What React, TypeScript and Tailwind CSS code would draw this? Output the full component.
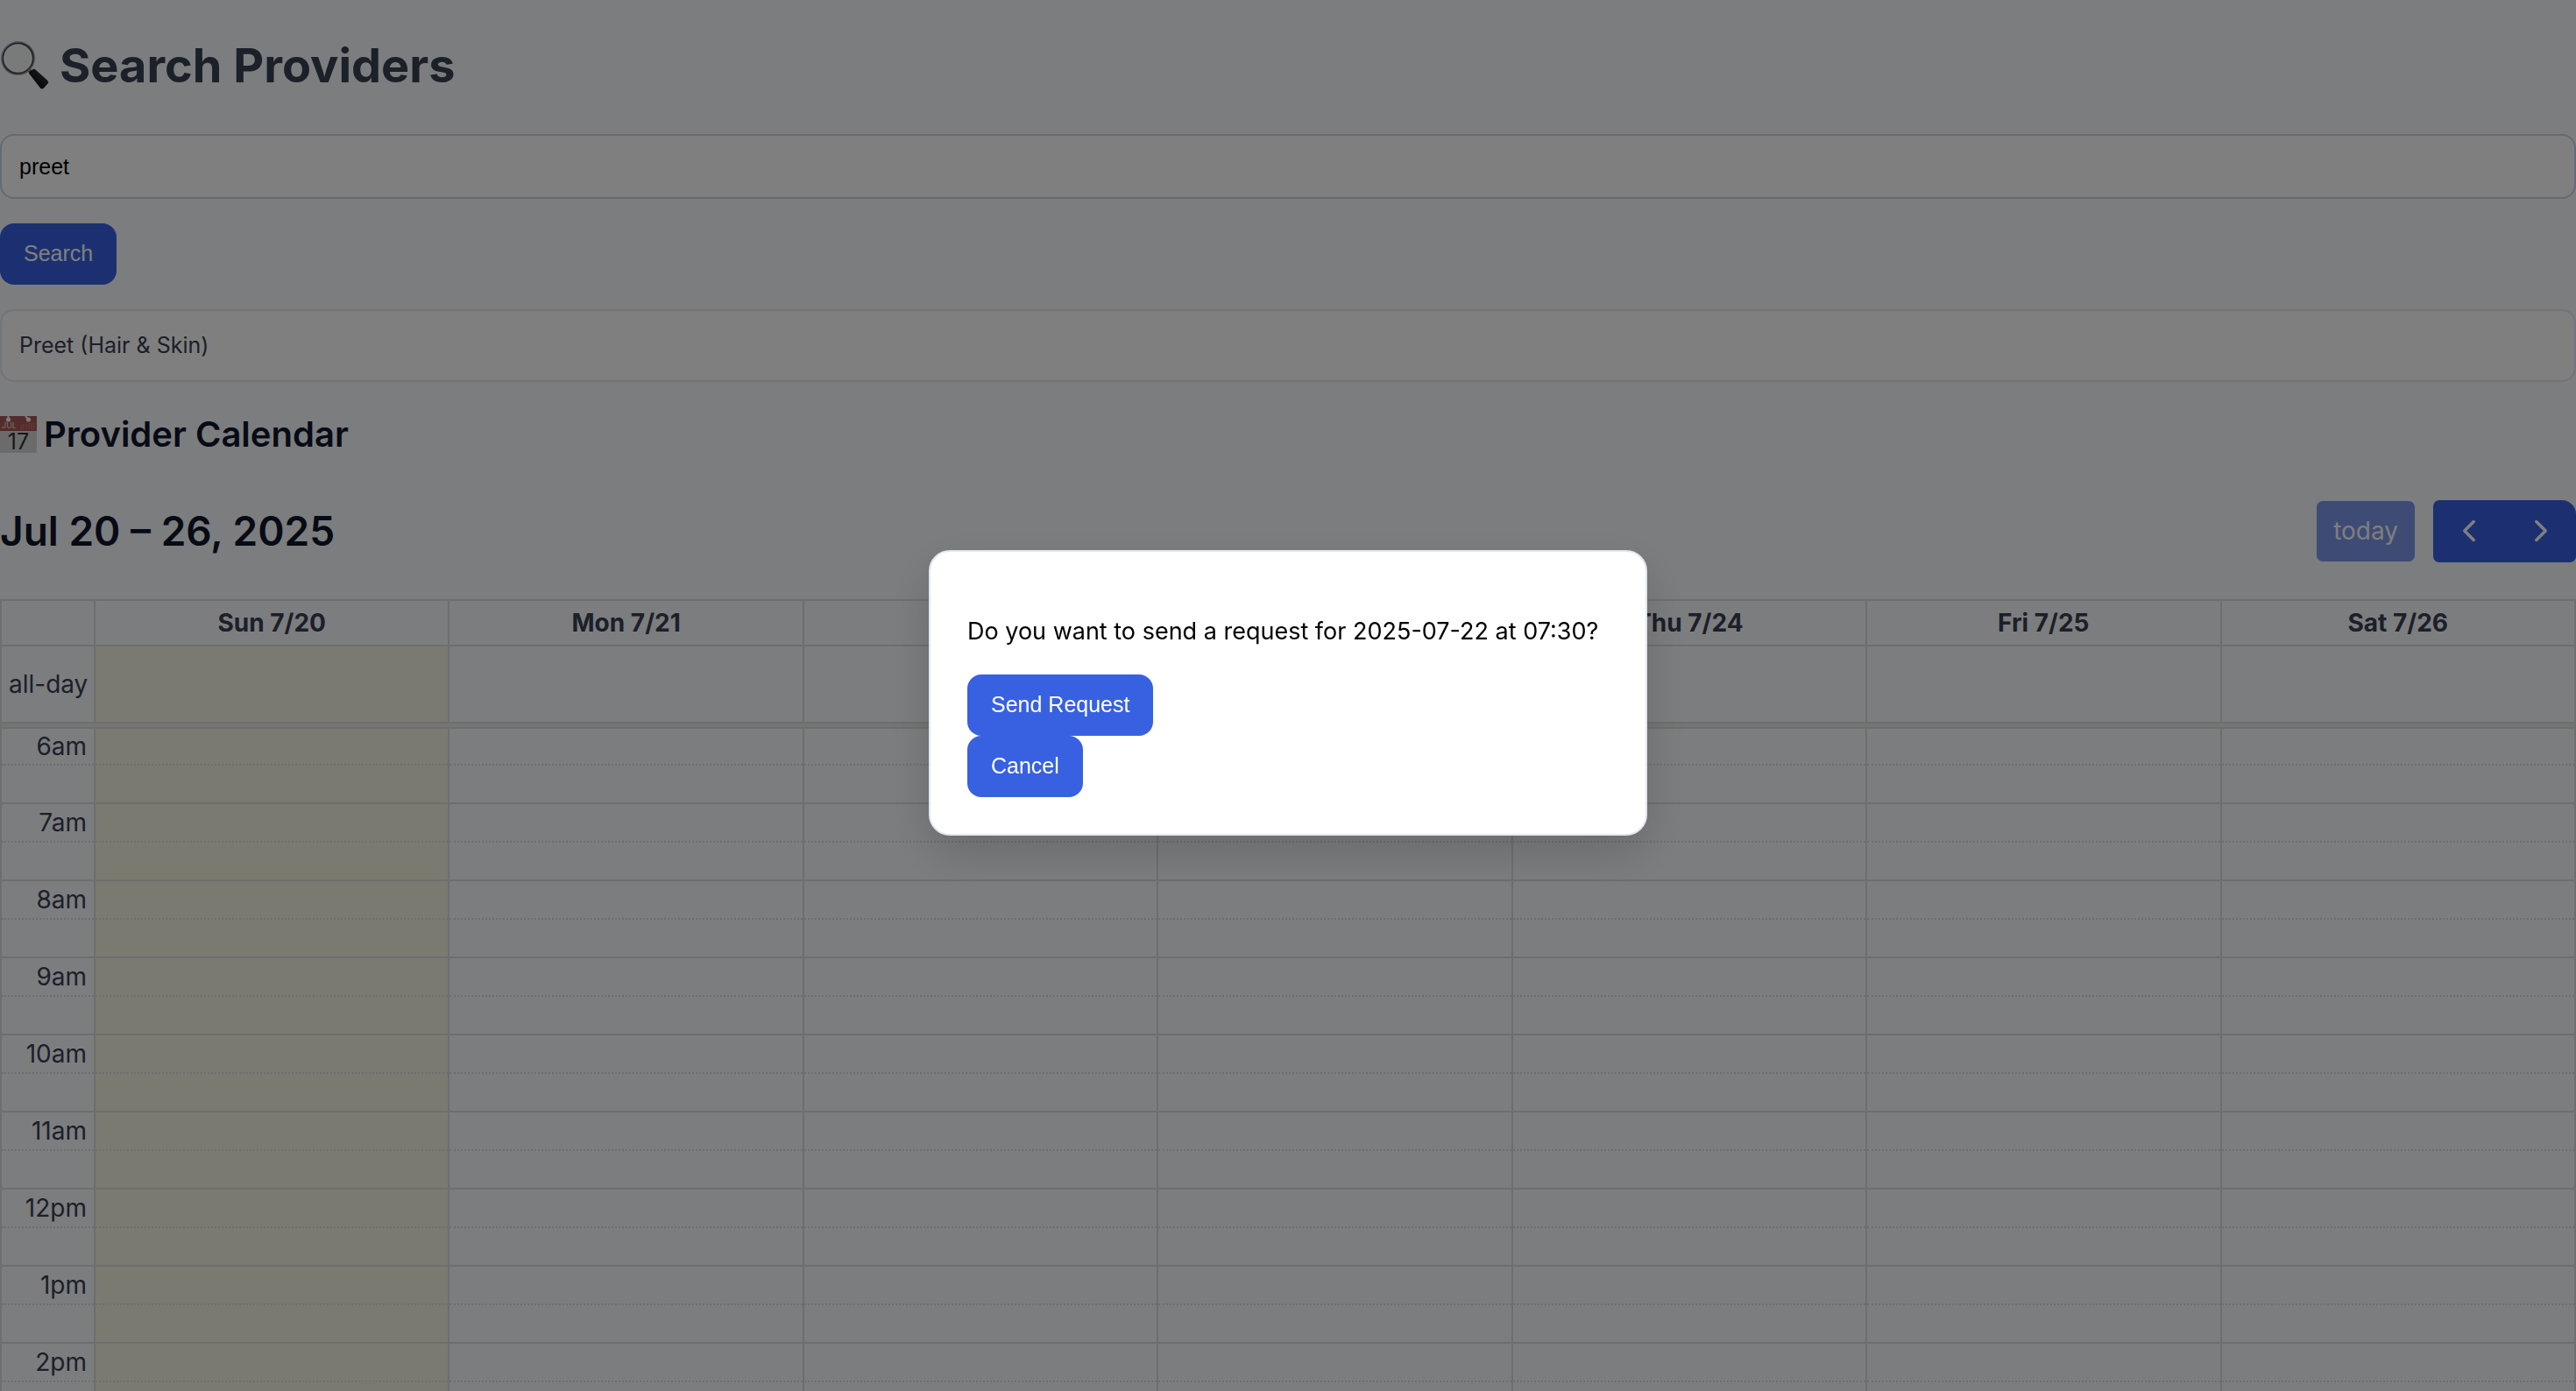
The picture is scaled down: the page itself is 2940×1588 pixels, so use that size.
import { ChevronLeft, ChevronRight } from "lucide-react";

const days = ["Sun 7/20", "Mon 7/21", "Tue 7/22", "Wed 7/23", "Thu 7/24", "Fri 7/25", "Sat 7/26"];
const hours = ["6am", "7am", "8am", "9am", "10am", "11am", "12pm", "1pm", "2pm"];

function MagnifierIcon() {
  return (
    <svg viewBox="0 0 56 56" className="size-14 shrink-0" aria-hidden="true">
      <defs>
        <linearGradient id="rim" x1="0" y1="0" x2="1" y2="1">
          <stop offset="0" stopColor="#9fb6d2" />
          <stop offset="0.5" stopColor="#77777a" />
          <stop offset="1" stopColor="#a09d96" />
        </linearGradient>
        <linearGradient id="grip" x1="0" y1="1" x2="1" y2="0">
          <stop offset="0" stopColor="#000000" />
          <stop offset="0.6" stopColor="#26262a" />
          <stop offset="1" stopColor="#5c5c60" />
        </linearGradient>
      </defs>
      <path d="M32 32 L37 37" stroke="#6a6a6c" strokeWidth="4" />
      <circle cx="20.5" cy="19.5" r="17.8" fill="#f3f6f5" stroke="url(#rim)" strokeWidth="3" />
      <circle cx="20.5" cy="19.5" r="17.2" fill="none" stroke="#3f3f42" strokeWidth="1.2" />
      <path
        d="M34 38 Q32 36 34 34.500 L37 32.500 Q39 31 41 33 L54 44.500 Q56 46.500 54.500 48.500 L50 53.500 Q48 55.500 46 53.500 Z"
        fill="url(#grip)"
      />
    </svg>
  );
}

function CalendarIcon() {
  return (
    <svg viewBox="0 0 42 42" className="size-[42px] shrink-0" aria-hidden="true">
      <rect width="42" height="42" fill="#d6d6d6" />
      <rect width="42" height="17" fill="#a95856" />
      <path d="M9.500 0v4M29 0l3.500 4" stroke="#f4f4f4" strokeWidth="2" />
      <circle cx="9.5" cy="4" r="2.6" fill="#f4f4f4" />
      <circle cx="32.5" cy="4" r="2.6" fill="#f4f4f4" />
      <text x="2" y="14" fontSize="9" fontWeight="500" fill="#e8cfcf" fontFamily="Inter, sans-serif">
        JUL
      </text>
      <path d="M24 10v5M27 9v6M30 9v6M33 8v7M36 8v7M39 7v8" stroke="#bd8280" strokeWidth="1" />
      <text x="21" y="38" fontSize="25" fontWeight="400" textAnchor="middle" fill="#333" fontFamily="Inter, sans-serif">
        17
      </text>
    </svg>
  );
}

const action =
  "cursor-pointer rounded-2xl bg-[#3861e2] px-[27px] pt-[19px] pb-[21px] font-['Liberation_Sans',sans-serif] text-[25px] leading-[30px] text-white";

export default function App() {
  return (
    <div className="h-screen overflow-hidden bg-slate-50 font-[Inter,sans-serif] text-[28px] leading-[42px] text-gray-700">
      <main>
        <h1 className="mb-1 flex h-[149px] items-center gap-3 text-[54px] font-bold">
          <MagnifierIcon />
          Search Providers
        </h1>
        <input
          type="text"
          aria-label="Search providers"
          defaultValue="preet"
          className="block h-[74px] w-full rounded-2xl border-2 border-slate-300 bg-white px-5 font-['Liberation_Sans',sans-serif] text-[25px] text-black"
        />
        <button type="button" className={`${action} mt-7 block`}>
          Search
        </button>
        <ul className="mt-7">
          <li className="rounded-2xl border-2 border-slate-200 bg-white px-5 py-5 text-[25px] leading-[39px]">
            Preet (Hair &amp; Skin)
          </li>
        </ul>
        <h2 className="mt-8 flex h-14 items-center gap-2 text-[40px] font-semibold text-slate-900">
          <CalendarIcon />
          Provider Calendar
        </h2>

        <div className="mt-[46px] flex h-[72px] items-center justify-between">
          <h2 className="text-[46px] font-semibold text-slate-900">Jul 20 – 26, 2025</h2>
          <div className="flex items-center gap-[21px]">
            <button type="button" disabled className="h-[69px] rounded-[7px] bg-[#3861e2] px-[19px] text-white opacity-65">
              today
            </button>
            <div className="flex overflow-hidden rounded-[7px] rounded-tr-2xl bg-[#3861e2] text-white">
              <button type="button" aria-label="Previous week" className="flex h-[71px] w-[82px] items-center justify-center">
                <ChevronLeft size={42} strokeWidth={2} />
              </button>
              <button type="button" aria-label="Next week" className="flex h-[71px] w-[81px] items-center justify-center">
                <ChevronRight size={42} strokeWidth={2} />
              </button>
            </div>
          </div>
        </div>

        <table className="mt-[42px] w-full table-fixed border-collapse border-2 border-[#ddd]">
          <colgroup>
            <col className="w-[107px]" />
            {days.map((d) => (
              <col key={d} />
            ))}
          </colgroup>
          <thead>
            <tr className="h-[52px]">
              <th className="border-2 border-[#ddd]" />
              {days.map((d) => (
                <th key={d} scope="col" className="border-2 border-[#ddd] p-0 font-bold">
                  {d}
                </th>
              ))}
            </tr>
          </thead>
          <tbody>
            <tr className="h-[88px]">
              <th scope="row" className="border-2 border-[#ddd] px-2 text-right font-normal whitespace-nowrap">
                all-day
              </th>
              {days.map((d, i) => (
                <td key={d} className={`border-2 border-[#ddd] ${i === 0 ? "bg-[#f7f4e0]" : ""}`} />
              ))}
            </tr>
            <tr className="h-1.5">
              <td colSpan={8} className="border-2 border-[#ddd] bg-[#e9eaeb] p-0" />
            </tr>
            {hours.flatMap((h, row) => [
              <tr key={h} className={row === 0 ? "h-[42px]" : "h-11"}>
                <th
                  scope="row"
                  className="border-2 border-[#ddd] [border-bottom-style:dotted] p-0 pr-2 text-right leading-10 font-normal"
                >
                  {h}
                </th>
                {days.map((d, i) => (
                  <td
                    key={d}
                    className={`border-2 border-[#ddd] [border-bottom-style:dotted] ${i === 0 ? "bg-[#f7f4e0]" : ""}`}
                  />
                ))}
              </tr>,
              <tr key={`${h}-half`} className="h-11">
                <td className="border-2 border-[#ddd] [border-top-style:dotted]" />
                {days.map((d, i) => (
                  <td
                    key={d}
                    className={`border-2 border-[#ddd] [border-top-style:dotted] ${i === 0 ? "bg-[#f7f4e0]" : ""}`}
                  />
                ))}
              </tr>,
            ])}
          </tbody>
        </table>
      </main>

      <div className="fixed inset-0 flex items-center justify-center bg-black/50 pb-1.5">
        <div
          role="dialog"
          aria-modal="true"
          aria-labelledby="request-question"
          className="min-w-[820px] rounded-3xl border-2 border-slate-200 bg-white p-[42px] text-black shadow-[0_20px_50px_rgba(0,0,0,0.15)]"
        >
          <p id="request-question" className="my-7 text-[27px]">
            Do you want to send a request for 2025-07-22 at 07:30?
          </p>
          <div className="flex flex-col items-start">
            <button type="button" className={action}>
              Send Request
            </button>
            <button type="button" className={action}>
              Cancel
            </button>
          </div>
        </div>
      </div>
    </div>
  );
}
